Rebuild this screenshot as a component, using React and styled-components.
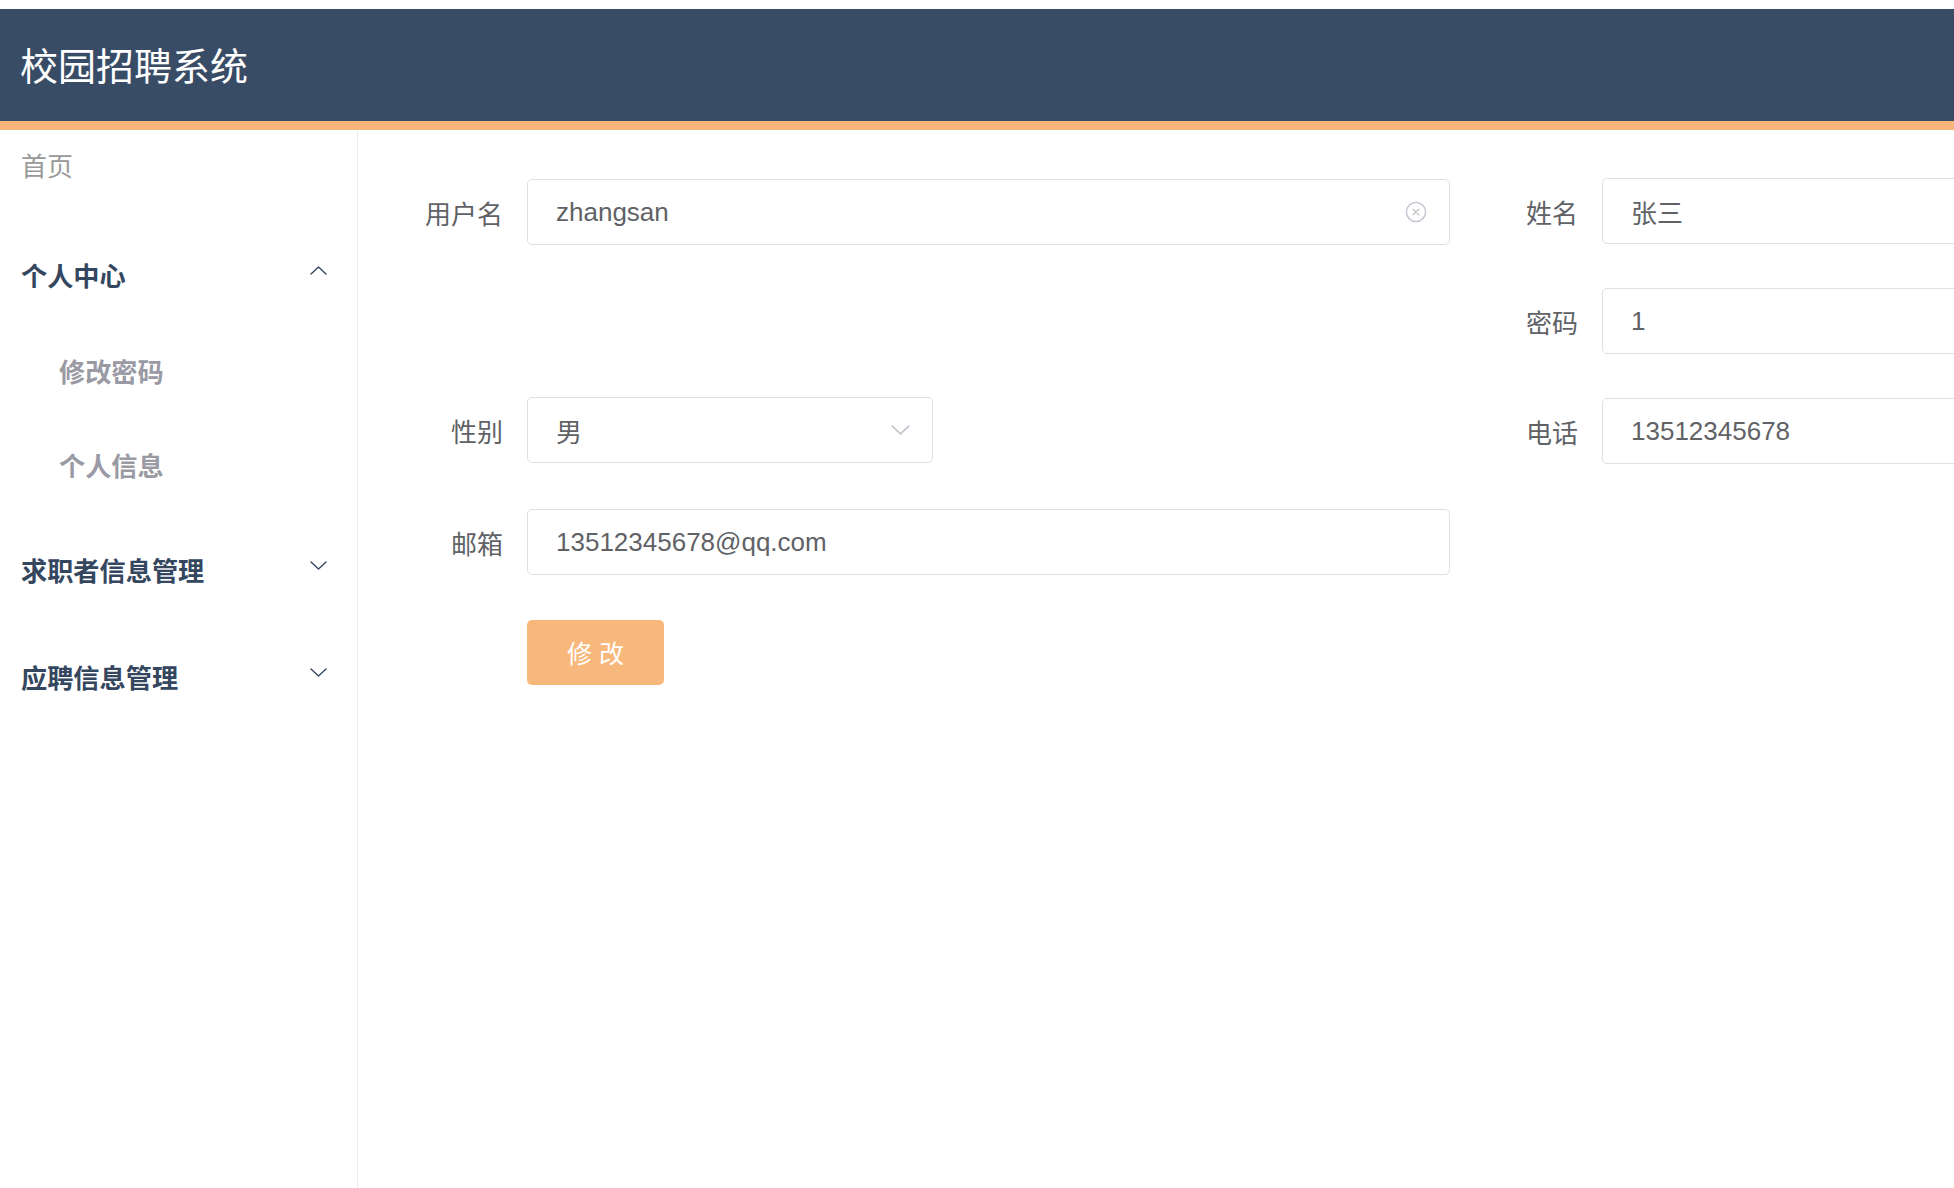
import React from 'react';
import styled, { createGlobalStyle } from 'styled-components';

const GlobalStyle = createGlobalStyle`
  html, body {
    margin: 0;
    padding: 0;
    background: #fff;
    overflow: hidden;
  }
  body {
    font-family: "Liberation Sans", "Noto Sans CJK SC", sans-serif;
  }
  * { box-sizing: border-box; }
`;

const colors = {
  header: '#384c66',
  orange: '#f8b57a',
  button: '#f8b87c',
  navy: '#35475f',
  grey: '#9a9aa4',
  text: '#606266',
  border: '#dcdfe6',
  icon: '#c0c4cc',
};

const Page = styled.div`
  padding-top: 9px;
  height: 1188px;
  display: flex;
  flex-direction: column;
`;

const Header = styled.header`
  height: 121px;
  background: ${colors.header};
  border-bottom: 9px solid ${colors.orange};
  display: flex;
  align-items: center;
  padding: 0 0 4px 20px;
  flex-shrink: 0;
`;

const Title = styled.h1`
  margin: 0;
  font-size: 38px;
  font-weight: 400;
  color: #fff;
`;

const Body = styled.div`
  flex: 1;
  display: flex;
  min-height: 0;
`;

const Sidebar = styled.aside`
  width: 358px;
  flex-shrink: 0;
  border-right: 1px solid #ebebeb;
`;

const HomeLink = styled.div`
  height: 68px;
  margin-bottom: 28px;
  padding-left: 21px;
  display: flex;
  align-items: center;
  font-size: 26px;
  color: #999;
`;

const Group = styled.div`
  margin-bottom: 9px;
`;

const GroupTitle = styled.div`
  height: 98px;
  padding: 0 30px 0 21px;
  display: flex;
  align-items: center;
  justify-content: space-between;
  font-size: 26.2px;
  font-weight: 700;
  color: ${colors.navy};

  svg {
    margin-top: -10px;
  }
`;

const SubItem = styled.div`
  height: 94px;
  padding-left: 59px;
  display: flex;
  align-items: center;
  font-size: 26.2px;
  font-weight: 700;
  color: ${colors.grey};
`;

const Main = styled.main`
  flex: 1;
  min-width: 0;
  overflow: hidden;
  padding: 49px 0 0 19px;
`;

const Form = styled.form`
  display: flex;
  align-items: flex-start;
`;

const Column = styled.div`
  width: 1075px;
  flex-shrink: 0;
  display: flex;
  flex-direction: column;
  gap: 44px;
`;

const Item = styled.div`
  height: 66px;
  display: flex;
  align-items: center;
  margin-top: ${p => p.$shift || 0}px;
`;

const Label = styled.label`
  width: 150px;
  flex-shrink: 0;
  padding-right: 24px;
  text-align: right;
  font-size: 26px;
  color: ${colors.text};
`;

const Field = styled.div`
  width: ${p => p.$width || 923}px;
  height: 66px;
  border: 1px solid ${colors.border};
  border-radius: 5px;
  display: flex;
  align-items: center;
  padding: 0 22px 0 28px;
  background: #fff;
`;

const Value = styled.span`
  flex: 1;
  font-size: 26px;
  color: ${colors.text};
  white-space: nowrap;
`;

const Button = styled.button`
  width: 137px;
  height: 65px;
  border: none;
  border-radius: 5px;
  background: ${colors.button};
  color: #fff;
  font-family: inherit;
  font-size: 25px;
  cursor: pointer;
  padding: 0;
`;

const ChevronIcon = ({ up, color = colors.navy, width = 17, height = 9 }) => (
  <svg width={width} height={height} viewBox="0 0 17 9" fill="none">
    <polyline
      points={up ? '1,8 8.5,1 16,8' : '1,1 8.5,8 16,1'}
      stroke={color}
      strokeWidth="1.4"
      strokeLinecap="round"
      strokeLinejoin="round"
    />
  </svg>
);

const ClearIcon = () => (
  <svg width="22" height="22" viewBox="0 0 22 22" fill="none">
    <circle cx="11" cy="11" r="9.6" stroke={colors.icon} strokeWidth="1.4" />
    <path d="M8.2 8.2 L13.8 13.8 M13.8 8.2 L8.2 13.8" stroke={colors.icon} strokeWidth="1.4" strokeLinecap="round" />
  </svg>
);

const menu = [
  { title: '个人中心', open: true, children: ['修改密码', '个人信息'] },
  { title: '求职者信息管理', open: false, children: [] },
  { title: '应聘信息管理', open: false, children: [] },
];

const FormRow = ({ label, shift, children }) => (
  <Item $shift={shift}>
    <Label>{label}</Label>
    {children}
  </Item>
);

export default function App() {
  return (
    <Page>
      <GlobalStyle />
      <Header>
        <Title>校园招聘系统</Title>
      </Header>
      <Body>
        <Sidebar>
          <HomeLink>首页</HomeLink>
          {menu.map(group => (
            <Group key={group.title}>
              <GroupTitle>
                <span>{group.title}</span>
                <ChevronIcon up={group.open} />
              </GroupTitle>
              {group.open && group.children.map(c => <SubItem key={c}>{c}</SubItem>)}
            </Group>
          ))}
        </Sidebar>
        <Main>
          <Form onSubmit={e => e.preventDefault()}>
            <Column>
              <FormRow label="用户名">
                <Field>
                  <Value>zhangsan</Value>
                  <ClearIcon />
                </Field>
              </FormRow>
              <Item />
              <FormRow label="性别" shift={-2}>
                <Field $width={406}>
                  <Value>男</Value>
                  <ChevronIcon color={colors.icon} width={19} height={10} />
                </Field>
              </FormRow>
              <FormRow label="邮箱" shift={2}>
                <Field>
                  <Value>13512345678@qq.com</Value>
                </Field>
              </FormRow>
              <FormRow label="">
                <Button type="submit">修 改</Button>
              </FormRow>
            </Column>
            <Column>
              <FormRow label="姓名" shift={-1}>
                <Field>
                  <Value>张三</Value>
                </Field>
              </FormRow>
              <FormRow label="密码">
                <Field>
                  <Value>1</Value>
                </Field>
              </FormRow>
              <FormRow label="电话">
                <Field>
                  <Value>13512345678</Value>
                </Field>
              </FormRow>
            </Column>
          </Form>
        </Main>
      </Body>
    </Page>
  );
}
